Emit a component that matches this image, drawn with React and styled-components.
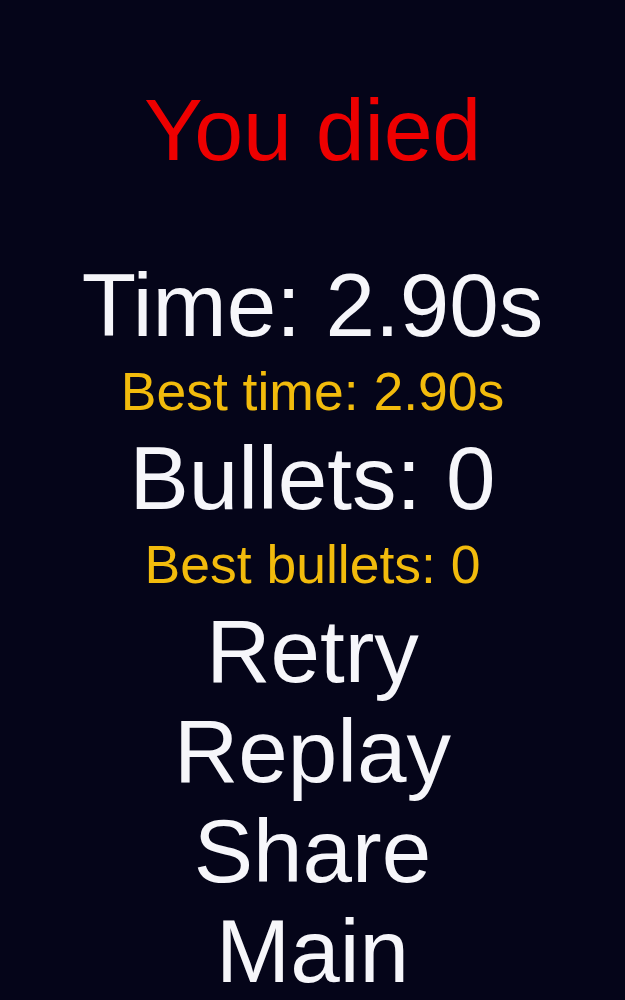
import React from "react";
import styled, { createGlobalStyle } from "styled-components";

const Global = createGlobalStyle`
  html, body {
    margin: 0;
    padding: 0;
    background: #050519;
  }
  body {
    font-family: "Liberation Sans", Arial, sans-serif;
  }
`;

const Screen = styled.main`
  width: 625px;
  height: 1000px;
  overflow: hidden;
  display: flex;
  flex-direction: column;
  align-items: center;
  padding-top: 80px;
  box-sizing: border-box;
  background: #050519;
`;

const Title = styled.h1`
  margin: 0 0 75px;
  font-family: "Liberation Sans", Arial, sans-serif;
  font-weight: 400;
  font-size: 88px;
  line-height: 100px;
  color: #ee0000;
  letter-spacing: -0.3px;
`;

const Stat = styled.div`
  font-size: ${(p) => (p.$small ? "53.5px" : "89px")};
  line-height: ${(p) => (p.$small ? "73px" : "100px")};
  color: ${(p) => (p.$small ? "#f2bb0c" : "#f6f6fa")};
  white-space: nowrap;
`;

const Menu = styled.nav`
  display: flex;
  flex-direction: column;
  align-items: center;
`;

const MenuButton = styled.button`
  background: none;
  border: none;
  padding: 0;
  margin: 0;
  font-family: "Liberation Sans", Arial, sans-serif;
  font-size: 89px;
  line-height: 100px;
  color: #f6f6fa;
  cursor: pointer;
`;

export default function App() {
  return (
    <>
      <Global />
      <Screen>
        <Title>You died</Title>
        <Stat>Time: 2.90s</Stat>
        <Stat $small>Best time: 2.90s</Stat>
        <Stat>Bullets: 0</Stat>
        <Stat $small>Best bullets: 0</Stat>
        <Menu>
          <MenuButton>Retry</MenuButton>
          <MenuButton>Replay</MenuButton>
          <MenuButton>Share</MenuButton>
          <MenuButton>Main</MenuButton>
        </Menu>
      </Screen>
    </>
  );
}
